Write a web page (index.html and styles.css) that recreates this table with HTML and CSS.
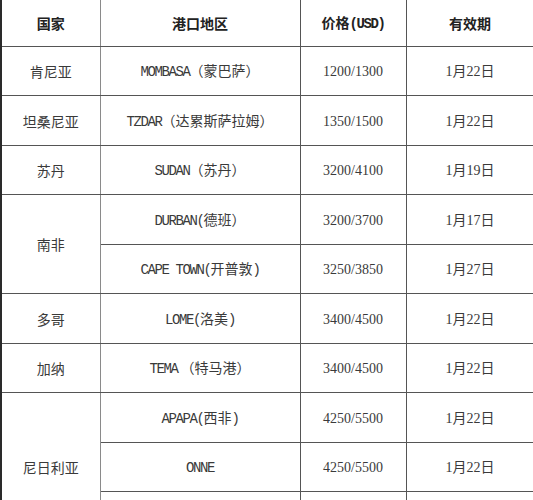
FILE: index.html
```html
<!DOCTYPE html>
<html lang="zh-CN">
<head>
<meta charset="utf-8">
<title>港口价格表</title>
<link rel="stylesheet" href="styles.css">
</head>
<body>
<table class="rates">
  <colgroup>
    <col class="c1"><col class="c2"><col class="c3"><col class="c4">
  </colgroup>
  <thead>
    <tr><th class="country">国家</th><th>港口地区</th><th>价格<span class="en">(USD)</span></th><th>有效期</th></tr>
  </thead>
  <tbody>
    <tr><td class="country">肯尼亚</td><td><span class="en">MOMBASA</span>（蒙巴萨）</td><td><span class="num">1200/1300</span></td><td><span class="num">1</span>月<span class="num">22</span>日</td></tr>
    <tr><td class="country">坦桑尼亚</td><td><span class="en">TZDAR</span>（达累斯萨拉姆）</td><td><span class="num">1350/1500</span></td><td><span class="num">1</span>月<span class="num">22</span>日</td></tr>
    <tr><td class="country">苏丹</td><td><span class="en">SUDAN</span>（苏丹）</td><td><span class="num">3200/4100</span></td><td><span class="num">1</span>月<span class="num">19</span>日</td></tr>
    <tr><td class="country" rowspan="2">南非</td><td><span class="en">DURBAN(</span>德班）</td><td><span class="num">3200/3700</span></td><td><span class="num">1</span>月<span class="num">17</span>日</td></tr>
    <tr><td><span class="en">CAPE TOWN(</span>开普敦<span class="en">)</span></td><td><span class="num">3250/3850</span></td><td><span class="num">1</span>月<span class="num">27</span>日</td></tr>
    <tr><td class="country">多哥</td><td><span class="en">LOME(</span>洛美<span class="en">)</span></td><td><span class="num">3400/4500</span></td><td><span class="num">1</span>月<span class="num">22</span>日</td></tr>
    <tr><td class="country">加纳</td><td><span class="en">TEMA</span> （特马港）</td><td><span class="num">3400/4500</span></td><td><span class="num">1</span>月<span class="num">22</span>日</td></tr>
    <tr><td class="country" rowspan="3">尼日利亚</td><td><span class="en">APAPA(</span>西非<span class="en">)</span></td><td><span class="num">4250/5500</span></td><td><span class="num">1</span>月<span class="num">22</span>日</td></tr>
    <tr><td><span class="en">ONNE</span></td><td><span class="num">4250/5500</span></td><td><span class="num">1</span>月<span class="num">22</span>日</td></tr>
    <tr><td></td><td></td><td></td></tr>
  </tbody>
</table>
</body>
</html>
```
FILE: styles.css
```css
html, body {
  margin: 0;
  padding: 0;
  background: #ffffff;
}

.rates {
  border-collapse: collapse;
  table-layout: fixed;
  width: 533px;
  font-family: "Noto Sans CJK SC", sans-serif;
  font-size: 14px;
  color: #3a3a3a;
}

.c1 { width: 99px; }
.c2 { width: 200px; }
.c3 { width: 106px; }
.c4 { width: 128px; }

.rates th,
.rates td {
  text-align: center;
  vertical-align: middle;
  padding: 0;
  border: 1px solid #555555;
  line-height: 20px;
}

.rates thead th {
  border-top: none;
  height: 46px;
  font-weight: 700;
  color: #222222;
}

.rates tbody tr:nth-child(odd) td { height: 48px; }
.rates tbody tr:nth-child(even) td { height: 49px; }

.rates .country {
  border-left: 2px solid #2a2a2a;
  border-right-color: #8a8a8a;
}

.rates th:last-child,
.rates td:last-child {
  border-right: 1px solid #888888;
}

.en {
  font-family: "Liberation Mono", monospace;
  font-size: 14px;
  letter-spacing: -1.4px;
}

.num {
  font-family: "Liberation Serif", serif;
  font-size: 14px;
}
```
